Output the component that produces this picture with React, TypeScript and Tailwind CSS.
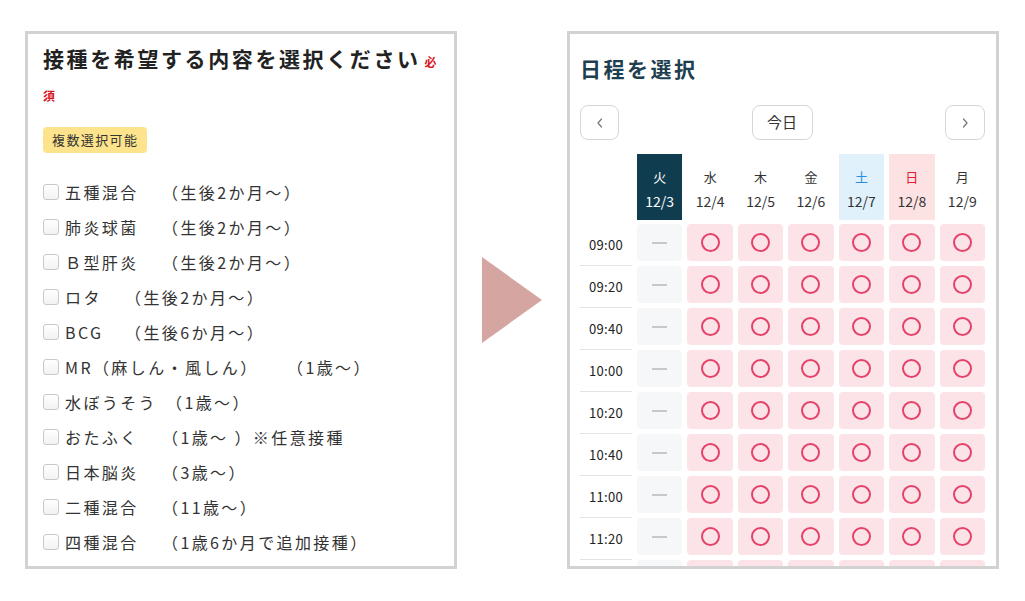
import React from "react";

const items: { name: string; w: number; rest: string }[] = [
  { name: "五種混合", w: 97, rest: "（生後2か月～）" },
  { name: "肺炎球菌", w: 97, rest: "（生後2か月～）" },
  { name: "Ｂ型肝炎", w: 97, rest: "（生後2か月～）" },
  { name: "ロタ", w: 60, rest: "（生後2か月～）" },
  { name: "BCG", w: 60, rest: "（生後6か月～）" },
  { name: "MR（麻しん・風しん）", w: 222, rest: "（1歳～）" },
  { name: "水ぼうそう", w: 101, rest: "（1歳～）" },
  { name: "おたふく", w: 97, rest: "（1歳～ ）※任意接種" },
  { name: "日本脳炎", w: 97, rest: "（3歳～）" },
  { name: "二種混合", w: 97, rest: "（11歳～）" },
  { name: "四種混合", w: 97, rest: "（1歳6か月で追加接種）" },
];

const days = [
  { d: "火", date: "12/3", kind: "today" },
  { d: "水", date: "12/4", kind: "" },
  { d: "木", date: "12/5", kind: "" },
  { d: "金", date: "12/6", kind: "" },
  { d: "土", date: "12/7", kind: "sat" },
  { d: "日", date: "12/8", kind: "sun" },
  { d: "月", date: "12/9", kind: "" },
];

const times = ["09:00", "09:20", "09:40", "10:00", "10:20", "10:40", "11:00", "11:20", ""];

function Circle() {
  return <div className="h-[19px] w-[19px] rounded-full border-2 border-[#e5426a]" />;
}

function Chevron({ dir }: { dir: "l" | "r" }) {
  return (
    <svg width="10" height="12" viewBox="0 0 10 12" fill="none">
      {dir === "l" ? (
        <path d="M6.5 2 L3 6 L6.5 10" stroke="#777" strokeWidth="1.2" strokeLinecap="round" strokeLinejoin="round" />
      ) : (
        <path d="M3.5 2 L7 6 L3.5 10" stroke="#777" strokeWidth="1.2" strokeLinecap="round" strokeLinejoin="round" />
      )}
    </svg>
  );
}

export default function App() {
  return (
    <div className="h-[601px] w-[1025px] bg-white font-['Noto_Sans_CJK_JP',sans-serif] text-[#333]">
      <div className="flex items-start pl-[25px] pt-[31px]">
        {/* Left panel */}
        <div className="h-[538px] w-[432px] overflow-hidden border-[3px] border-[#d2d2d2] pl-[15px] pt-[9px]">
          <h2 className="whitespace-nowrap text-[21px] font-bold leading-[31px] tracking-[2.6px] text-[#222]">
            接種を希望する内容を選択ください
            <span className="ml-[4px] text-[12px] font-bold tracking-normal text-[#d9161e]">
              必<br />須
            </span>
          </h2>
          <div className="mt-[16px] flex h-[26px] w-fit items-center rounded-[4px] bg-[#fde38c] px-[9px] text-[13px] leading-[26px] tracking-[1.4px] text-[#333]">
            複数選択可能
          </div>
          <ul className="mt-[21px]">
            {items.map((it) => (
              <li key={it.name} className="flex h-[35px] items-center">
                <span className="h-[16px] w-[16px] shrink-0 rounded-[3px] border border-[#c9c9c9] bg-gradient-to-b from-white to-[#f2f2f2]" />
                <span className="ml-[6px] whitespace-nowrap text-[16px] tracking-[2.4px] text-[#333]">
                  <span className="inline-block whitespace-nowrap" style={{ width: it.w }}>
                    {it.name}
                  </span>
                  <span className="inline-block">{it.rest}</span>
                </span>
              </li>
            ))}
          </ul>
        </div>

        {/* Arrow */}
        <div className="ml-[25px] mt-[226px] h-[86px] w-[60px]">
          <svg width="60" height="86" viewBox="0 0 60 86">
            <polygon points="0,0 60,43 0,86" fill="#d4a5a1" />
          </svg>
        </div>

        {/* Right panel */}
        <div className="ml-[25px] h-[538px] w-[432px] overflow-hidden border-[3px] border-[#d2d2d2] pl-[10px] pr-[11px] pt-[19px]">
          <h2 className="h-[30px] text-[21px] font-bold leading-[30px] tracking-[2.5px] text-[#1d3f50]">日程を選択</h2>
          <div className="mt-[22px] flex items-center justify-between">
            <button className="flex h-[35px] w-[39px] items-center justify-center rounded-[8px] border border-[#d6d6d6] bg-white">
              <Chevron dir="l" />
            </button>
            <button className="flex h-[35px] w-[61px] items-center justify-center rounded-[8px] border border-[#d6d6d6] bg-white text-[15px] text-[#333]">
              今日
            </button>
            <button className="flex h-[35px] w-[40px] items-center justify-center rounded-[8px] border border-[#d6d6d6] bg-white">
              <Chevron dir="r" />
            </button>
          </div>

          {/* header */}
          <div className="mt-[14px] grid grid-cols-[52px_repeat(7,1fr)] gap-x-[5px]">
            <div />
            {days.map((d) => (
              <div
                key={d.date}
                className={
                  "flex h-[66px] flex-col items-center justify-center pt-[3px] " +
                  (d.kind === "today"
                    ? "bg-[#103c4f] text-white"
                    : d.kind === "sat"
                    ? "bg-[#e1f1fc]"
                    : d.kind === "sun"
                    ? "bg-[#fde2e4]"
                    : "")
                }
              >
                <div
                  className={
                    "text-[13px] leading-[18px] " +
                    (d.kind === "today"
                      ? "text-white"
                      : d.kind === "sat"
                      ? "text-[#2a8ee0]"
                      : d.kind === "sun"
                      ? "text-[#e0202e]"
                      : "text-[#333]")
                  }
                >
                  {d.d}
                </div>
                <div className={"mt-[6px] text-[14px] leading-[18px] " + (d.kind === "today" ? "text-white" : "text-[#333]")}>
                  {d.date}
                </div>
              </div>
            ))}
          </div>

          {/* rows */}
          <div className="mt-[4px]">
            {times.map((t, r) => (
              <div key={r} className="grid h-[42px] grid-cols-[52px_repeat(7,1fr)] gap-x-[5px]">
                <div className="flex h-[42px] items-center justify-center border-b border-[#e4e4e4] text-[13px] tracking-[0.3px] text-[#222]">
                  {t}
                </div>
                {days.map((d, i) => (
                  <div
                    key={d.date}
                    className={
                      "flex h-[37px] items-center justify-center rounded-[4px] " +
                      (i === 0 ? "bg-[#f6f7f8]" : "bg-[#fce3e8]")
                    }
                  >
                    {i === 0 ? <div className="h-[2px] w-[15px] bg-[#c8c8c8]" /> : <Circle />}
                  </div>
                ))}
              </div>
            ))}
          </div>
        </div>
      </div>
    </div>
  );
}
